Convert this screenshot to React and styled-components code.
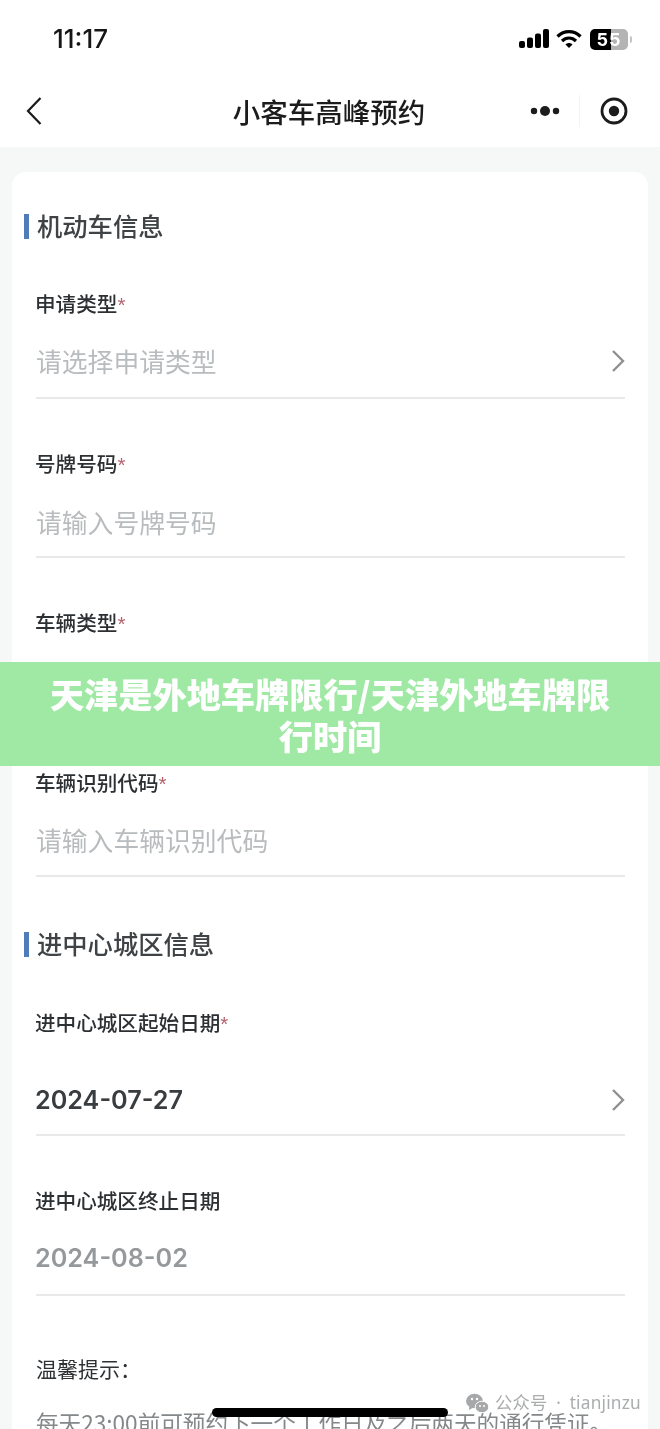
import React from "react";
import styled, { createGlobalStyle } from "styled-components";

const Global = createGlobalStyle`
  html, body { margin: 0; padding: 0; background: #fff; }
  body { font-family: "Noto Sans CJK SC", "Noto Sans", sans-serif; }
  * { box-sizing: border-box; }
`;
const Page = styled.div`
  position: relative; width: 660px; height: 1429px; overflow: hidden;
  background: #f6f8f8; display: flex; flex-direction: column; filter: blur(0.35px);
`;
const Top = styled.header`background: #fff; height: 147px; flex: none; display: flex; flex-direction: column;`;
const StatusBar = styled.div`
  height: 78px; display: flex; align-items: center; justify-content: space-between;
  padding: 0 28px 0 53px;
`;
const Time = styled.span`
  font: 500 26px/30px Inter, sans-serif; color: #161616; letter-spacing: 0;
`;
const StatusIcons = styled.div`display: flex; align-items: center; gap: 7px;`;
const Battery = styled.div`
  position: relative; width: 38px; height: 21px; border-radius: 5px; margin: 0 4px 0 1px;
  background: linear-gradient(90deg, #000 0 54%, #b4b4b4 54% 100%);
  display: flex; align-items: center; justify-content: center;
  font: 700 18px/21px Inter, sans-serif; color: #fff; letter-spacing: 1px;
  &::after {
    content: ""; position: absolute; right: -4px; top: 7px; width: 2px; height: 7px;
    border-radius: 0 2px 2px 0; background: #c4c4c4;
  }
`;
const Nav = styled.div`
  height: 69px; display: grid; grid-template-columns: 1fr auto 1fr; align-items: center;
  padding: 0 32px 4px 26px;
`;
const Title = styled.h1`
  margin: 0 0 0 4px; font-size: 27.5px; line-height: 38px; font-weight: 500; color: #1c1c1c;
`;
const Capsule = styled.div`justify-self: end; display: flex; align-items: center;`;
const CapsuleCell = styled.div`
  display: flex; align-items: center; justify-content: center; height: 32px;
  &:first-child { width: 65px; border-right: 1px solid #f4f4f4; margin-right: 20px; padding-right: 5px; }
`;
const Card = styled.main`
  margin: 25px 12px 0; background: #fff; border-radius: 14px 14px 0 0; flex: 1;
  padding: 36px 23px 0 24px;
`;
const SectionTitle = styled.h2`
  margin: ${p => p.$mt || 0}px 0 0 -12px; height: 34px; display: flex; align-items: center; gap: 8px;
  font-size: 25.3px; line-height: 34px; font-weight: 500; color: #3f4345;
  &::before { content: ""; width: 5px; height: 25px; margin-top: 2px; background: #4f7db8; }
`;
const Field = styled.section`
  display: flex; flex-direction: column; border-bottom: 2px solid #e8eaea;
  height: ${p => p.$h || 159}px; padding-top: ${p => p.$pt || 50}px;
`;
const Label = styled.div`
  font-size: 20.6px; line-height: 28px; font-weight: 500; color: #2c3033; margin-left: -1px;
`;
const Star = styled.span`color: #b4636c; font-family: "Liberation Sans", sans-serif;`;
const ValueRow = styled.div`
  display: flex; align-items: center; justify-content: space-between;
  height: 40px; margin-top: ${p => p.$mt || 23}px;
`;
const Placeholder = styled.span`
  font-size: 25.8px; line-height: 40px; color: #b9bcbe; font-weight: 400; white-space: nowrap;
`;
const DateValue = styled.span`
  font: 600 25.2px/40px Inter, "Noto Sans", sans-serif; color: ${p => p.$muted ? "#96999b" : "#3a3d3f"};
  margin-left: -1px;
`;
const Tip = styled.div`font-size: 21px; line-height: 30px; color: #2f3234; margin-top: 57px;`;
const TipText = styled.div`
  font-size: 22.6px; line-height: 34px; color: #85888a; white-space: nowrap; margin-top: 23px;
`;
const Banner = styled.div`
  position: absolute; left: 0; top: 662px; width: 660px; height: 104px;
  background: #a0e9a5; color: #fff; text-align: center; padding: 10px 40px 0;
  font-size: 34.2px; line-height: 42px; font-weight: 900;
`;
const Watermark = styled.div`
  position: absolute; left: 466px; top: 1391px; display: flex; align-items: center; gap: 6px;
  font-family: "Noto Sans", "Noto Sans CJK SC", sans-serif;
  font-size: 17.3px; line-height: 24px; color: #aaacad; white-space: nowrap;
  word-spacing: 4px; letter-spacing: 0.2px;
`;
const Home = styled.div`
  position: absolute; left: 212px; top: 1408px; width: 236px; height: 9px;
  border-radius: 5px; background: #000;
`;

const Signal = () => (
  <svg width="30" height="20" viewBox="0 0 30 20" fill="#000">
    <rect x="0" y="12" width="6" height="7" rx="2" />
    <rect x="8" y="8.5" width="6" height="10.5" rx="2" />
    <rect x="16" y="4.5" width="6" height="14.5" rx="2" />
    <rect x="24" y="0" width="6" height="19" rx="2" />
  </svg>
);
const Wifi = () => (
  <svg width="26" height="20" viewBox="0 0 26 20" fill="none" stroke="#000" strokeWidth="3.2">
    <path d="M1.5 7.5C8 1 18 1 24.5 7.5" />
    <path d="M6 12C10 8 16 8 20 12" />
    <path d="M9.5 15.5L13 19L16.5 15.5C14.5 13.5 11.5 13.5 9.5 15.5Z" fill="#000" stroke="none" />
  </svg>
);
const Back = () => (
  <svg width="16" height="30" viewBox="0 0 16 30" fill="none" stroke="#1a1a1a" strokeWidth="2.2">
    <path d="M14.5 2L2 15L14.5 28" />
  </svg>
);
const Dots = () => (
  <svg width="30" height="12" viewBox="0 0 30 12" fill="#1c1c1c">
    <circle cx="4" cy="6" r="3.2" /><circle cx="15" cy="6" r="5" /><circle cx="26" cy="6" r="3.2" />
  </svg>
);
const Target = () => (
  <svg width="28" height="28" viewBox="0 0 28 28">
    <circle cx="14" cy="14" r="12" fill="none" stroke="#1c1c1c" strokeWidth="2.8" />
    <circle cx="14" cy="14" r="5.2" fill="#1c1c1c" />
  </svg>
);
const Chevron = () => (
  <svg width="14" height="24" viewBox="0 0 14 24" fill="none" stroke="#8e9092" strokeWidth="2.4">
    <path d="M2 2L12 12L2 22" />
  </svg>
);
const WeChat = () => (
  <svg width="23" height="21" viewBox="0 0 23 21" fill="#a6a8a9">
    <ellipse cx="8.5" cy="8" rx="8.5" ry="7.2" />
    <path d="M3.5 12L3 17L8.5 14Z" />
    <ellipse cx="16" cy="14" rx="6.8" ry="5.8" stroke="#fff" strokeWidth="1" />
    <circle cx="6" cy="6" r="1.2" fill="#fff" />
    <circle cx="11" cy="6" r="1.2" fill="#fff" />
    <circle cx="14" cy="13" r="1" fill="#fff" />
    <circle cx="18" cy="13" r="1" fill="#fff" />
  </svg>
);

export default function App() {
  return (
    <Page>
      <Global />
      <Top>
        <StatusBar>
          <Time>11:17</Time>
          <StatusIcons>
            <Signal /><Wifi /><Battery>55</Battery>
          </StatusIcons>
        </StatusBar>
        <Nav>
          <Back />
          <Title>小客车高峰预约</Title>
          <Capsule>
            <CapsuleCell><Dots /></CapsuleCell>
            <CapsuleCell><Target /></CapsuleCell>
          </Capsule>
        </Nav>
      </Top>
      <Card>
        <SectionTitle>机动车信息</SectionTitle>
        <Field $h={157} $pt={47}>
          <Label>申请类型<Star>*</Star></Label>
          <ValueRow $mt={22}><Placeholder>请选择申请类型</Placeholder><Chevron /></ValueRow>
        </Field>
        <Field>
          <Label>号牌号码<Star>*</Star></Label>
          <ValueRow><Placeholder>请输入号牌号码</Placeholder></ValueRow>
        </Field>
        <Field $h={160}>
          <Label>车辆类型<Star>*</Star></Label>
          <ValueRow $mt={22}><Placeholder>请选择车辆类型</Placeholder><Chevron /></ValueRow>
        </Field>
        <Field>
          <Label>车辆识别代码<Star>*</Star></Label>
          <ValueRow $mt={22}><Placeholder>请输入车辆识别代码</Placeholder></ValueRow>
        </Field>
        <SectionTitle $mt={49}>进中心城区信息</SectionTitle>
        <Field $h={176} $pt={48}>
          <Label>进中心城区起始日期<Star>*</Star></Label>
          <ValueRow $mt={42}><DateValue>2024-07-27</DateValue><Chevron /></ValueRow>
        </Field>
        <Field $h={160}>
          <Label>进中心城区终止日期</Label>
          <ValueRow $mt={24}><DateValue $muted>2024-08-02</DateValue></ValueRow>
        </Field>
        <Tip>温馨提示：</Tip>
        <TipText>每天23:00前可预约下一个工作日及之后两天的通行凭证。</TipText>
      </Card>
      <Banner>天津是外地车牌限行/天津外地车牌限行时间</Banner>
      <Watermark><WeChat />公众号 · tianjinzu</Watermark>
      <Home />
    </Page>
  );
}
